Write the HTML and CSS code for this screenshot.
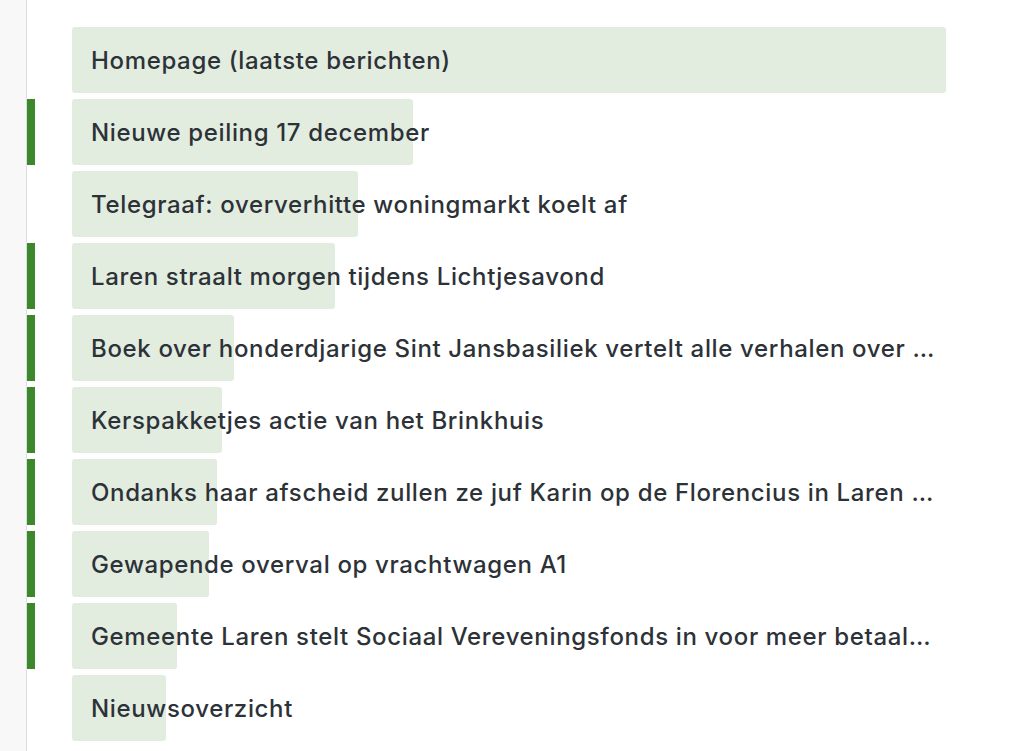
FILE: index.html
```html
<!DOCTYPE html>
<html lang="nl">
  <head>
    <meta charset="UTF-8" />
    <meta name="viewport" content="width=device-width, initial-scale=1.0" />
    <title>Populaire pagina's</title>
    <link rel="stylesheet" href="styles.css">
  </head>
  <body>
    <div class="layout">
      <div class="gutter"></div>

      <ul class="pages">
        <li class="page-row">
          <span class="mark"></span>
          <div class="page-item">
            <div class="page-bar" style="width: 100%"></div>
            <span class="page-name">Homepage (laatste berichten)</span>
          </div>
        </li>
        <li class="page-row is-new">
          <span class="mark"></span>
          <div class="page-item">
            <div class="page-bar" style="width: 39%"></div>
            <span class="page-name">Nieuwe peiling 17 december</span>
          </div>
        </li>
        <li class="page-row">
          <span class="mark"></span>
          <div class="page-item">
            <div class="page-bar" style="width: 32.7%"></div>
            <span class="page-name">Telegraaf: oververhitte woningmarkt koelt af</span>
          </div>
        </li>
        <li class="page-row is-new">
          <span class="mark"></span>
          <div class="page-item">
            <div class="page-bar" style="width: 30.1%"></div>
            <span class="page-name">Laren straalt morgen tijdens Lichtjesavond</span>
          </div>
        </li>
        <li class="page-row is-new">
          <span class="mark"></span>
          <div class="page-item">
            <div class="page-bar" style="width: 18.5%"></div>
            <span class="page-name">Boek over honderdjarige Sint Jansbasiliek vertelt alle verhalen over het gebouw</span>
          </div>
        </li>
        <li class="page-row is-new">
          <span class="mark"></span>
          <div class="page-item">
            <div class="page-bar" style="width: 17.2%"></div>
            <span class="page-name">Kerspakketjes actie van het Brinkhuis</span>
          </div>
        </li>
        <li class="page-row is-new">
          <span class="mark"></span>
          <div class="page-item">
            <div class="page-bar" style="width: 16.6%"></div>
            <span class="page-name">Ondanks haar afscheid zullen ze juf Karin op de Florencius in Laren niet vergeten</span>
          </div>
        </li>
        <li class="page-row is-new">
          <span class="mark"></span>
          <div class="page-item">
            <div class="page-bar" style="width: 15.7%"></div>
            <span class="page-name">Gewapende overval op vrachtwagen A1</span>
          </div>
        </li>
        <li class="page-row is-new">
          <span class="mark"></span>
          <div class="page-item">
            <div class="page-bar" style="width: 12%"></div>
            <span class="page-name">Gemeente Laren stelt Sociaal Vereveningsfonds in voor meer betaalbare woningen</span>
          </div>
        </li>
        <li class="page-row">
          <span class="mark"></span>
          <div class="page-item">
            <div class="page-bar" style="width: 10.8%"></div>
            <span class="page-name">Nieuwsoverzicht</span>
          </div>
        </li>
      </ul>
    </div>
  </body>
</html>
```

FILE: styles.css
```css
* {
  margin: 0;
  padding: 0;
  box-sizing: border-box;
}
body {
  font-family: Inter, "Noto Sans", sans-serif;
  background-color: #fff;
  color: #2c3237;
}
.layout {
  display: flex;
  min-height: 751px;
}
.gutter {
  width: 27px;
  flex-shrink: 0;
  background: #f8f8f8;
  border-right: 1px solid #dedede;
}
.pages {
  list-style: none;
  width: 919px;
  padding-top: 27px;
  display: flex;
  flex-direction: column;
  gap: 6px;
}
.page-row {
  display: flex;
  height: 66px;
}
.mark {
  width: 8px;
  flex-shrink: 0;
  margin-right: 37px;
}
.page-row.is-new .mark {
  background: #3b892c;
}
.page-item {
  position: relative;
  flex: 1;
  min-width: 0;
  display: flex;
  align-items: center;
  padding: 0 0 0 19px;
}
.page-bar {
  position: absolute;
  top: 0;
  left: 0;
  bottom: 0;
  background: #e2ecdf;
  border-radius: 3px;
}
.page-name {
  position: relative;
  font-size: 24px;
  font-weight: 500;
  letter-spacing: 0.65px;
  white-space: nowrap;
  overflow: hidden;
  text-overflow: ellipsis;
}
```
